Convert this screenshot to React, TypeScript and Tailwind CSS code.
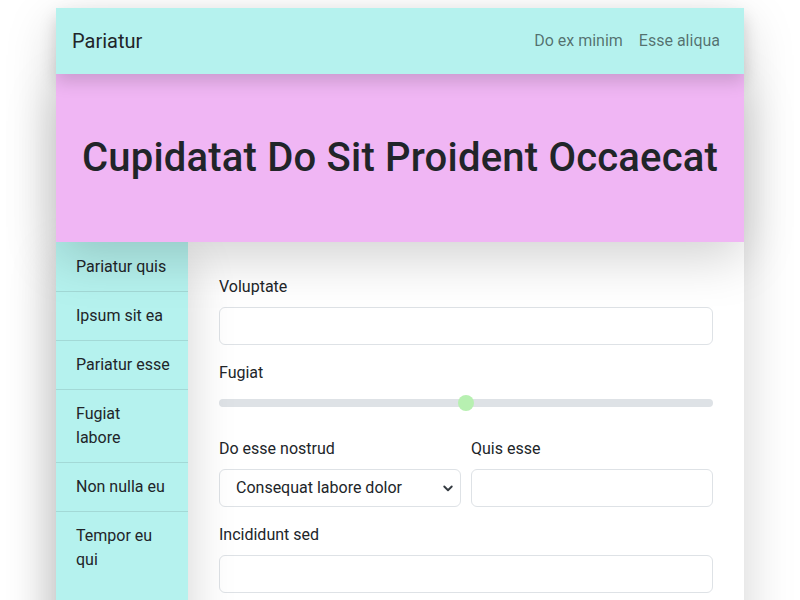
const links = ['Do ex minim', 'Esse aliqua'];

const sideItems = [
  'Pariatur quis',
  'Ipsum sit ea',
  'Pariatur esse',
  'Fugiat\nlabore',
  'Non nulla eu',
  'Tempor eu\nqui',
];

function Field({ label, children }: { label: string; children: React.ReactNode }) {
  return (
    <div className="mb-4 flex-1">
      <label className="mb-2 block leading-6">{label}</label>
      {children}
    </div>
  );
}

const inputCls =
  'block h-[38px] w-full rounded-md border border-[#dee2e6] bg-white px-3 text-base text-[#212529] outline-none';

export default function App() {
  return (
    <div className="min-h-screen bg-white pt-2 font-['Roboto',sans-serif] text-[#212529]">
      <div className="mx-auto flex w-[688px] flex-col shadow-[0_1rem_3rem_rgba(0,0,0,0.175)]">
        <nav className="relative z-30 flex h-[66px] items-center justify-between bg-[#b5f2ee] pl-4 pr-6 shadow-[0_0.5rem_1rem_rgba(0,0,0,0.15)]">
          <span className="text-xl">Pariatur</span>
          <div className="flex gap-4">
            {links.map((l) => (
              <a key={l} className="text-black/55">
                {l}
              </a>
            ))}
          </div>
        </nav>

        <header className="relative z-20 flex h-[168px] items-center justify-center bg-[#f0b6f4] shadow-[0_1rem_3rem_rgba(0,0,0,0.175)]">
          <h1 className="text-[40px] font-medium leading-tight tracking-[0.2px]">Cupidatat Do Sit Proident Occaecat</h1>
        </header>

        <div className="flex min-h-[400px]">
          <aside className="relative z-10 w-[132px] shrink-0 bg-[#b5f2ee] pt-px shadow-[0_1rem_3rem_rgba(0,0,0,0.175)]">
            {sideItems.map((s) => (
              <div key={s} className="whitespace-pre-line border-b border-[#a3d9d6] py-3 pl-5 pr-1 leading-6 last:border-b-0">
                {s}
              </div>
            ))}
          </aside>

          <main className="flex-1 bg-white px-[31px] pt-[33px]">
            <Field label="Voluptate">
              <input className={inputCls} />
            </Field>
            <Field label="Fugiat">
              <input
                type="range"
                defaultValue={50}
                className="block h-5 w-full cursor-pointer appearance-none bg-transparent [&::-webkit-slider-runnable-track]:h-2 [&::-webkit-slider-runnable-track]:rounded-full [&::-webkit-slider-runnable-track]:bg-[#dee2e6] [&::-webkit-slider-thumb]:-mt-1 [&::-webkit-slider-thumb]:h-4 [&::-webkit-slider-thumb]:w-4 [&::-webkit-slider-thumb]:appearance-none [&::-webkit-slider-thumb]:rounded-full [&::-webkit-slider-thumb]:bg-[#b7f0b1]"
              />
            </Field>
            <div className="flex gap-[10px] pt-2">
              <Field label="Do esse nostrud">
                <div className="relative">
                  <select className={inputCls + ' appearance-none pl-4'}>
                    <option>Consequat labore dolor</option>
                  </select>
                  <svg
                    className="pointer-events-none absolute right-[7px] top-1/2 h-3 w-3 -translate-y-1/2"
                    viewBox="0 0 16 16"
                    fill="none"
                    stroke="#343a40"
                    strokeWidth="2.5"
                    strokeLinecap="round"
                    strokeLinejoin="round"
                  >
                    <path d="M3 6l5 5 5-5" />
                  </svg>
                </div>
              </Field>
              <Field label="Quis esse">
                <input className={inputCls} />
              </Field>
            </div>
            <Field label="Incididunt sed">
              <input className={inputCls} />
            </Field>
          </main>
        </div>
      </div>
    </div>
  );
}
